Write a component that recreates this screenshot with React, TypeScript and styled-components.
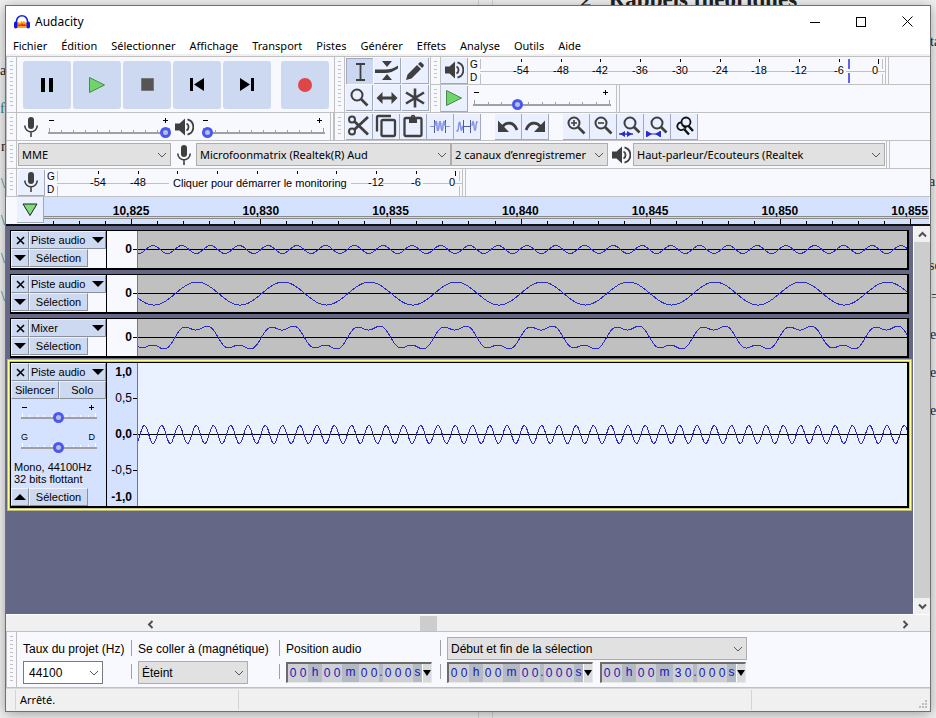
import React from "react";
import styled, { createGlobalStyle } from "styled-components";

const UI = '"Noto Sans", "Open Sans", sans-serif';
const ARIAL = '"Liberation Sans", Arial, sans-serif';
const PANEL = "#f8f9ff";
const LINE = "#c0c0c0";
const BTN = "#cdd9f0";
const WAVE = "#2c2cc4";

const Global = createGlobalStyle`
  *, *::before, *::after { box-sizing: border-box; }
  body { margin: 0; background: #f1f1f1; font-family: ${UI}; font-size: 11px; color: #000; }
  button, input, select { font: inherit; color: inherit; margin: 0; padding: 0; border: 0; border-radius: 0; outline: 0; background: none; }
  svg { display: block; }
`;

/* ---------- desktop behind the window ---------- */

const Desktop = styled.div`
  position: relative;
  display: flex;
  min-height: 100vh;
  padding: 5px 5px 6px;
  overflow: hidden;
`;
const Snippet = styled.span<{ $x?: number; $right?: number; $y: number; $c?: string; $big?: boolean }>`
  position: absolute;
  ${(p) => (p.$right !== undefined ? `left: calc(100% - ${p.$right}px);` : `left: ${p.$x}px;`)}
  top: ${(p) => p.$y}px;
  font: ${(p) => (p.$big ? "bold 23px/24px" : "14px/16px")} "Liberation Serif", serif;
  color: ${(p) => p.$c || "#222"};
  white-space: pre;
`;
const Sheet = styled.div`
  position: absolute;
  inset: 0 auto 0 478px;
  width: 15px;
  border: solid #d4d4d4;
  border-width: 0 1px;
`;
const Window = styled.main`
  position: relative;
  flex: 1;
  min-width: 0;
  display: flex;
  flex-direction: column;
  border: 1px solid #707070;
  background: #fff;
  box-shadow: 0 2px 12px rgba(0, 0, 0, 0.35);
`;

/* ---------- title and menu ---------- */

const TitleBar = styled.header`
  display: flex;
  align-items: center;
  height: 31px;
  padding-left: 8px;
`;
const Title = styled.h1`
  margin: 0 auto 0 5px;
  font-size: 12px;
  font-weight: 400;
`;
const CaptionButton = styled.button`
  width: 46px;
  height: 29px;
  display: grid;
  place-items: center;
`;
const MenuBar = styled.nav`
  display: flex;
  height: 19px;
  border-bottom: 2px solid #f0f0f0;
`;
const MenuItem = styled.button`
  padding: 0 7px;
  font-size: 11px;
  line-height: 17px;
  white-space: nowrap;
`;

/* ---------- toolbars ---------- */

const Dock = styled.section`
  display: flex;
  flex-direction: column;
  background: ${PANEL};
  border-top: 1px solid ${LINE};
`;
const DockRow = styled.div<{ $h?: number }>`
  display: flex;
  min-height: ${(p) => p.$h || 28}px;
  border-bottom: 1px solid ${LINE};
`;
const Stack = styled.div`
  flex: 1;
  display: flex;
  flex-direction: column;
  & > * { flex: 1; min-height: 27px; }
  & > * + * { border-top: 1px solid ${LINE}; }
`;
const Strip = styled.div`
  display: flex;
`;
const Bar = styled.div<{ $w?: number; $end?: boolean }>`
  display: flex;
  align-items: center;
  flex: none;
  ${(p) => (p.$w ? `width: ${p.$w}px;` : "")}
  ${(p) => (p.$end ? `border-right: 4px double ${LINE};` : "")}
`;
const Grip = styled.div`
  align-self: stretch;
  flex: none;
  width: 11px;
  padding: 4px 3px 4px 3px;
  border: solid ${LINE};
  border-width: 0 1px;
  &::before {
    content: "";
    display: block;
    height: 100%;
    background: repeating-linear-gradient(${LINE} 0 1px, transparent 1px 4px);
  }
`;
const Transport = styled.div`
  display: flex;
  gap: 2px;
  padding-left: 6px;
`;
const BigButton = styled.button<{ $apart?: boolean }>`
  width: 48px;
  height: 48px;
  margin-left: ${(p) => (p.$apart ? 8 : 0)}px;
  display: grid;
  place-items: center;
  background: ${BTN};
  border-radius: 3px;
`;
const ToolGrid = styled.div`
  display: grid;
  grid-template-columns: repeat(3, 27px);
  gap: 1px;
  padding: 0 1px;
`;
const ToolButton = styled.button<{ $on?: boolean }>`
  width: 27px;
  height: 26px;
  flex: none;
  display: grid;
  place-items: center;
  background: ${(p) => (p.$on ? "#cbd7f0" : "#eaf0ff")};
  border: solid #a3a9bd;
  border-width: ${(p) => (p.$on ? "1px 0 0 1px" : "0 1px 1px 0")};
`;
const ToolRun = styled.div<{ $gap?: boolean }>`
  display: flex;
  margin-left: ${(p) => (p.$gap ? 14 : 1)}px;
`;
const IconSlot = styled.span<{ $w: number }>`
  flex: none;
  width: ${(p) => p.$w}px;
  display: grid;
  place-items: center;
`;
const Channels = styled.div`
  flex: none;
  display: flex;
  flex-direction: column;
  justify-content: center;
  width: 12px;
  padding-left: 2px;
  font: 10px/13px ${ARIAL};
`;
const ScaleSvg = styled.svg<{ $w: number }>`
  width: ${(p) => p.$w}px;
  height: 26px;
  font: 11px ${ARIAL};
`;

/* ---------- slider ---------- */

const SliderBox = styled.div<{ $w: number; $small?: boolean }>`
  flex: none;
  display: grid;
  grid-template: 100% / 100%;
  width: ${(p) => p.$w}px;
  height: ${(p) => (p.$small ? 20 : 22)}px;
  & > * { grid-area: 1 / 1; }
`;
const SliderArt = styled.svg`
  width: 100%;
  height: 100%;
  overflow: visible;
  font: 10px ${ARIAL};
`;
const Range = styled.input<{ $small?: boolean }>`
  appearance: none;
  align-self: end;
  width: 100%;
  height: 11px;
  min-width: 0;
  &::-webkit-slider-thumb {
    appearance: none;
    width: 11px;
    height: 11px;
    border: 3px solid #4a58ee;
    border-radius: 50%;
    background: #b9bde0;
  }
`;

function Slider(p: { label: string; w: number; value: number; ticks: number; small?: boolean; a?: string; b?: string }) {
  const h = p.small ? 20 : 22;
  const y = h - 6;
  return (
    <SliderBox $w={p.w} $small={p.small}>
      <SliderArt aria-hidden="true" shapeRendering="crispEdges">
        <rect x="0" y={y} width="100%" height="2" fill="#a0a0a0" />
        {Array.from({ length: p.ticks }, (_, i) => {
          const x = 1 + (i * (p.w - 3)) / (p.ticks - 1);
          const tall = i === 0 || i === p.ticks - 1;
          return <rect key={i} x={Math.round(x)} y={y - (tall ? 4 : 2)} width="1" height={tall ? 4 : 2} fill={p.small ? "#fff" : "#a0a0a0"} />;
        })}
        {p.a ? (
          <>
            <text x="0" y="7" fontSize="9">{p.a}</text>
            <text x={p.w - 2} y="7" fontSize="9" textAnchor="end">{p.b}</text>
          </>
        ) : (
          <>
            <path d="M1 4.5h5" stroke="#000" />
            <path d={`M${p.w - 8} 4.5h5M${p.w - 5.5} 2v5`} stroke="#000" />
          </>
        )}
      </SliderArt>
      <Range type="range" aria-label={p.label} min="0" max="100" defaultValue={p.value} />
    </SliderBox>
  );
}

/* ---------- drop-down ---------- */

const SelectBox = styled.span<{ $w: number; $white?: boolean; $arial?: boolean }>`
  flex: none;
  display: grid;
  align-items: center;
  width: ${(p) => p.$w}px;
  height: 23px;
  border: 1px solid ${(p) => (p.$white ? "#7a7a7a" : "#adadad")};
  background: ${(p) => (p.$white ? "#fff" : "#e1e1e1")};
  & > * { grid-area: 1 / 1; }
  & > select {
    appearance: none;
    width: 100%;
    height: 100%;
    min-width: 0;
    padding: 0 17px 0 ${(p) => (p.$white ? 5 : 3)}px;
    font: 12px ${(p) => (p.$arial ? ARIAL : UI)};
    font-size: ${(p) => (p.$arial ? 12 : 11)}px;
  }
  & > svg { justify-self: end; margin-right: 3px; pointer-events: none; }
`;
function Select(p: { label?: string; id?: string; w: number; text: string; white?: boolean; arial?: boolean }) {
  return (
    <SelectBox $w={p.w} $white={p.white} $arial={p.arial}>
      <select id={p.id} aria-label={p.label} defaultValue={p.text}>
        <option>{p.text}</option>
      </select>
      <svg width="10" height="6" viewBox="0 0 10 6" fill="none" stroke="#555">
        <path d="M1 1l4 4 4-4" />
      </svg>
    </SelectBox>
  );
}

/* ---------- icons ---------- */

const INK = "#3f3f3f";
const Mic = () => (
  <svg width="18" height="22" viewBox="0 0 18 22" fill="none" stroke={INK} strokeWidth="1.6">
    <rect x="6" y="1" width="6" height="12" rx="3" fill={INK} stroke="none" />
    <path d="M2.8 9.5a6.2 6.4 0 0 0 12.4 0M9 16v5" />
  </svg>
);
const Speaker = () => (
  <svg width="20" height="20" viewBox="0 0 20 20" fill="none" stroke={INK} strokeWidth="1.8">
    <path d="M1 6.500h4.500L11 1.500v17L5.500 13.500H1z" fill={INK} stroke="none" />
    <path d="M12.500 6.500a4 4 0 0 1 0 7M13.500 2.300a8 8 0 0 1 0 15.400" />
  </svg>
);
const IBeam = () => (
  <svg width="20" height="20" viewBox="0 0 20 20" fill="none" stroke={INK} strokeWidth="1.800">
    <path d="M6 2h9M10.500 2v16M6 18h9" />
  </svg>
);
const Envelope = () => (
  <svg width="26" height="22" viewBox="0 0 26 22" fill={INK}>
    <path d="M8 1h10l-5 6zM8 20h10l-5-6z" />
    <path d="M1 9.500h10c5 0 8-1 13-4v3c-5 3-8 4.500-13 4.500H1z" />
  </svg>
);
const Pencil = () => (
  <svg width="20" height="20" viewBox="0 0 20 20" fill={INK}>
    <path d="M1 19l1.500-5.500L12 4l4 4-9.500 9.500zM13 3l1.500-1.500a1.500 1.500 0 0 1 2 0l2 2a1.500 1.500 0 0 1 0 2L17 7z" />
  </svg>
);
const Lens = ({ mark }: { mark?: string }) => (
  <svg width="22" height="22" viewBox="0 0 22 22" fill="none" stroke={INK}>
    <circle cx="9" cy="8" r="5.500" strokeWidth="2" />
    <path d="M13 12l6.500 6.500" strokeWidth="2.600" />
    {mark === "+" && <path d="M9 5v6M6 8h6" strokeWidth="1.600" />}
    {mark === "-" && <path d="M6 8h6" strokeWidth="1.600" />}
  </svg>
);
const LensFit = ({ project }: { project?: boolean }) => (
  <svg width="24" height="24" viewBox="0 0 24 24" fill="none" stroke={INK}>
    <circle cx="12" cy="9" r="5.500" strokeWidth="2" />
    <path d="M16 13l5.500 5.500" strokeWidth="2.600" />
    {project ? (
      <g fill="#2b2bc8" stroke="#2b2bc8">
        <path d="M1.500 17v6M15.500 17v6M2 20h13" fill="none" />
        <path d="M2 17l5 3-5 3zM15 17l-5 3 5 3z" stroke="none" />
      </g>
    ) : (
      <g fill="#2b2bc8" stroke="#2b2bc8">
        <path d="M1 20h14" fill="none" strokeWidth="1.400" />
        <path d="M7 17l-5 3 5 3zM9 17l5 3-5 3z" stroke="none" />
      </g>
    )}
  </svg>
);
const LensToggle = () => (
  <svg width="22" height="22" viewBox="0 0 22 22" fill="none" stroke="#111" strokeWidth="1.800">
    <circle cx="13" cy="7" r="4.500" />
    <path d="M8 7.500a3.800 3.800 0 1 0 3 6.200" />
    <path d="M11 14l5 5.500M15.500 11l4.500 5" strokeWidth="2.400" />
    <path d="M9 9.500l4 4" />
  </svg>
);
const Arrows = () => (
  <svg width="24" height="20" viewBox="0 0 24 20" fill={INK}>
    <path d="M1.500 10l6-6v4.600h9V4l6 6-6 6v-4.600h-9V16z" />
  </svg>
);
const Star = () => (
  <svg width="22" height="22" viewBox="0 0 22 22" stroke={INK} strokeWidth="2.600">
    <path d="M11 1.500v19M2 5.500l18 11M20 5.500l-18 11" />
  </svg>
);
const Cut = () => (
  <svg width="24" height="24" viewBox="0 0 24 24" fill="none" stroke={INK} strokeWidth="2">
    <circle cx="5" cy="5.500" r="3" />
    <circle cx="5" cy="17.500" r="3" />
    <path d="M7.500 7.500L21 20.500M7.500 15.500L21 3" strokeWidth="2.800" />
  </svg>
);
const Copy = () => (
  <svg width="24" height="24" viewBox="0 0 24 24" fill="none" stroke={INK} strokeWidth="2.300">
    <path d="M3 17.500V3q0-1 1-1h13" />
    <rect x="7.500" y="6" width="13.500" height="16" rx="1.500" />
  </svg>
);
const Paste = () => (
  <svg width="24" height="24" viewBox="0 0 24 24" fill="none" stroke={INK} strokeWidth="2.300">
    <rect x="3.500" y="4" width="17" height="18" rx="1.500" />
    <path d="M8 9V4.500h2a2 2 0 0 1 4 0h2V9z" fill={INK} stroke="none" />
    <circle cx="12" cy="3" r="1.500" strokeWidth="1.500" />
  </svg>
);
const Trim = () => (
  <svg width="24" height="20" viewBox="0 0 24 20" fill="none" stroke="#8796ea" strokeWidth="1.200">
    <path d="M2 10.500h4M18 10.500h4" />
    <path d="M6.500 4v13M17.500 4v13" stroke="#4f5a9c" strokeWidth="1" />
    <path d="M7 10c.5-6 2-6 2 0s1.500 6 2 0 1.500-6 2 0 1.500 6 2 0 1.500-6 2 0" strokeWidth="1.600" />
  </svg>
);
const Silence = () => (
  <svg width="24" height="20" viewBox="0 0 24 20" fill="none" stroke="#8796ea" strokeWidth="1.500">
    <path d="M2 14c0 2 1.200 2 1.500-3s1.500-7 2-1 1.500 6 2 0M17 10c.5-6 1.500-6 2 0s1.500 6 2 0 1-4 1.500-3" />
    <path d="M8.500 4v13M15.500 4v13M9 10.500h6" stroke="#4f5a9c" strokeWidth="1" />
  </svg>
);
const Undo = ({ flip }: { flip?: boolean }) => (
  <svg width="24" height="18" viewBox="0 0 24 18">
    <g transform={flip ? "translate(24 0) scale(-1 1)" : undefined}>
      <path d="M6 10C11 4 18 5 21 13" fill="none" stroke={INK} strokeWidth="2.800" />
      <path d="M2 3.500V15h11z" fill={INK} />
    </g>
  </svg>
);
const Tri = ({ dir, w = 12 }: { dir: "up" | "down"; w?: number }) => (
  <svg width={w} height="6" viewBox="0 0 12 6" preserveAspectRatio="none">
    <path d={dir === "down" ? "M0 0h12l-6 6z" : "M0 6h12l-6-6z"} />
  </svg>
);
const GreenPlay = () => (
  <svg width="18" height="18" viewBox="0 0 18 18">
    <path d="M1.500 1.500L16.500 9l-15 7.500z" fill="#6fd56b" stroke="#4c8a4a" />
  </svg>
);
const Logo = () => (
  <svg width="16" height="16" viewBox="0 0 16 16">
    <path d="M3 14V9l1.500-1L6 9l1-2 1.500 1L10 7l1.500 1.500L13 9v5z" fill="#ffa31c" />
    <path d="M3.500 12l1.500-2 1.500 1L8 9l1.500 1.500L11 10l1.500 2z" fill="#e83010" />
    <path d="M2.500 9V7.500a5.500 5.800 0 0 1 11 0V9" fill="none" stroke="#1c28d8" strokeWidth="1.600" />
    <rect x="0" y="7.500" width="3.500" height="7" rx="1.700" fill="#1414e6" />
    <rect x="12.500" y="7.500" width="3.500" height="7" rx="1.700" fill="#1414e6" />
  </svg>
);

/* ---------- level meter ---------- */

const DB = ["-54", "-48", "-42", "-36", "-30", "-24", "-18", "-12", "-6", "0"];
function Meter({ w, first, step, labels, peak }: { w: number; first: number; step: number; labels: string[]; peak?: number }) {
  return (
    <ScaleSvg $w={w} aria-label="Niveau en dB">
      <g shapeRendering="crispEdges" fill={LINE}>
        <rect x="0" y="1" width="1" height="10" />
        <rect x="0" y="16" width="1" height="10" />
        <rect x="0" y="13" width={w} height="1" />
        <rect x={w - 3} y="1" width="1" height="10" />
        <rect x={w - 3} y="16" width="1" height="10" />
      </g>
      {DB.map((d, i) => {
        const x = Math.round(first + i * step);
        const last = d === "0";
        return (
          <g key={d}>
            <rect x={x} y="1" width="1" height={last ? 5 : 3} shapeRendering="crispEdges" />
            {labels.includes(d) && (
              <>
                <rect x={last ? x - 6 : x - (d === "-6" ? 0 : 3)} y="9" width={last ? 6 : 7} height="8" fill={PANEL} />
                <text x={last ? x - 3 : x} y="16" textAnchor="middle">{d}</text>
              </>
            )}
          </g>
        );
      })}
      {peak && (
        <g fill="#5f63ee" shapeRendering="crispEdges">
          <rect x={peak} y="1" width="2" height="10" />
          <rect x={peak} y="15" width="2" height="10" />
        </g>
      )}
    </ScaleSvg>
  );
}
const MeterArea = styled.div`
  display: grid;
  align-items: center;
  & > * { grid-area: 1 / 1; }
`;
const MeterHint = styled.button`
  justify-self: start;
  margin-left: 112px;
  padding: 0 4px;
  background: ${PANEL};
  font: 11px/16px ${ARIAL};
`;

/* ---------- timeline ---------- */

const Timeline = styled.div`
  display: flex;
  height: 29px;
  padding: 0 1px 0 11px;
  background: ${PANEL};
  border-bottom: 2px solid #111;
`;
const TimelineSvg = styled.svg`
  flex: 1;
  min-width: 0;
  height: 27px;
  background: #d5e2ff;
  font: bold 12px ${ARIAL};
`;
const TIMES = ["10,825", "10,830", "10,835", "10,840", "10,845", "10,850", "10,855"];
const RULER_SPAN = 884;

/* ---------- tracks ---------- */

const Workspace = styled.section`
  flex: 1;
  display: flex;
  min-height: 0;
`;
const TrackList = styled.div`
  flex: 1;
  min-width: 0;
  padding: 0 1px;
  background: #646786;
`;
const TrackFrame = styled.div<{ $focus?: boolean }>`
  padding: ${(p) => (p.$focus ? "2px" : "4px 3px 0")};
  ${(p) =>
    p.$focus
      ? "margin-top: 1px; border: 1px solid #b9b97c; background: #ffff8a;"
      : ""}
`;
const TrackBody = styled.article<{ $h: number; $focus?: boolean }>`
  display: flex;
  height: ${(p) => p.$h}px;
  border: 1px solid #000;
  border-right-width: 2px;
  border-bottom-width: 2px;
  box-shadow: ${(p) => (p.$focus ? "0 0 0 1px #c9c983" : "none")};
`;
const Head = styled.div<{ $focus?: boolean }>`
  flex: none;
  display: flex;
  flex-direction: column;
  width: 96px;
  border-right: 1px solid #000;
  background: ${(p) => (p.$focus ? "#d5e2ff" : PANEL)};
  font: 12px ${ARIAL};
`;
const HeadRow = styled.div`
  display: flex;
  flex: none;
`;
const HeadButton = styled.button<{ $w?: number; $menu?: boolean }>`
  height: 18px;
  ${(p) => (p.$w ? `width: ${p.$w}px;` : "flex: 1;")}
  display: flex;
  align-items: center;
  justify-content: ${(p) => (p.$menu ? "space-between" : "center")};
  padding: 0 ${(p) => (p.$menu ? 1 : 0)}px;
  background: ${BTN};
  border: solid;
  border-width: 1px;
  border-color: #eef2fd #8a8f9c #8a8f9c #eef2fd;
  font-size: 11px;
  white-space: nowrap;
`;
const HeadSliders = styled.div`
  flex: 1;
  display: flex;
  flex-direction: column;
  align-items: center;
  gap: 10px;
  padding-top: 4px;
`;
const HeadInfo = styled.p`
  margin: 0;
  padding: 0 3px 3px;
  font: 11px/12px ${ARIAL};
`;
const Scale = styled.div<{ $focus?: boolean }>`
  flex: none;
  width: 31px;
  display: grid;
  align-items: center;
  grid-template-rows: ${(p) => (p.$focus ? "18px 1fr 1fr 1fr 18px" : "1fr")};
  border-right: 1px solid #777;
  background: ${(p) => (p.$focus ? "#d5e2ff" : PANEL)};
`;
const Mark = styled.span<{ $bold?: boolean; $tick?: boolean }>`
  display: flex;
  align-items: center;
  justify-content: flex-end;
  gap: 1px;
  padding-right: ${(p) => (p.$tick ? 0 : 5)}px;
  font: ${(p) => (p.$bold ? "bold" : "normal")} 12px/15px ${ARIAL};
  &::after {
    content: "";
    display: ${(p) => (p.$tick ? "block" : "none")};
    width: 4px;
    height: 1px;
    background: #000;
  }
`;
const WaveSvg = styled.svg<{ $focus?: boolean }>`
  flex: 1;
  min-width: 0;
  height: 100%;
  background: ${(p) => (p.$focus ? "#eaf1ff" : "#c0c0c0")};
`;

type Harmonic = { amp: number; period: number; peak: number };
function Wave({ parts, h, focus }: { parts: Harmonic[]; h: number; focus?: boolean }) {
  const mid = h / 2;
  const pts: string[] = [];
  for (let x = 0; x <= 769; x++) {
    const v = parts.reduce((s, q) => s + q.amp * Math.cos((2 * Math.PI * (x - q.peak)) / q.period), 0);
    pts.push(`${x} ${(mid - v).toFixed(1)}`);
  }
  return (
    <WaveSvg $focus={focus} viewBox={`0 0 769 ${h}`} preserveAspectRatio="none" shapeRendering="crispEdges">
      <path d={`M0 ${mid}H769`} stroke="#000" vectorEffect="non-scaling-stroke" />
      <path d={`M${pts.join("L")}`} fill="none" stroke={WAVE} vectorEffect="non-scaling-stroke" />
    </WaveSvg>
  );
}

const LOW = { amp: 11.5, period: 86.3, peak: 59 };
const THIRD = { amp: 4, period: 28.77, peak: 15 };
const FIFTH = { amp: 9, period: 17.27, peak: 6.4 };

const CloseGlyph = () => (
  <svg width="9" height="9" viewBox="0 0 9 9" stroke="#000" strokeWidth="1.600">
    <path d="M1 1l7 7M8 1L1 8" />
  </svg>
);
function SmallTrack({ name, parts }: { name: string; parts: Harmonic[] }) {
  return (
    <TrackFrame>
      <TrackBody $h={40}>
        <Head>
          <HeadRow>
            <HeadButton $w={18} aria-label="Fermer la piste"><CloseGlyph /></HeadButton>
            <HeadButton $menu>{name}<Tri dir="down" /></HeadButton>
          </HeadRow>
          <HeadRow>
            <HeadButton $w={18} aria-label="Déplier"><Tri dir="down" /></HeadButton>
            <HeadButton $w={59}>Sélection</HeadButton>
          </HeadRow>
        </Head>
        <Scale><Mark $bold $tick>0</Mark></Scale>
        <Wave parts={parts} h={37} />
      </TrackBody>
    </TrackFrame>
  );
}

/* ---------- scroll bars ---------- */

const VScroll = styled.div`
  flex: none;
  width: 17px;
  display: flex;
  flex-direction: column;
  border-left: 1px solid #fff;
  background: #f0f0f0;
`;
const HScroll = styled.div`
  display: flex;
  height: 18px;
  padding: 1px 17px 1px 136px;
  border-top: 1px solid #fff;
  border-bottom: 1px solid ${LINE};
  background: #f0f0f0;
`;
const ScrollButton = styled.button`
  flex: none;
  width: 16px;
  height: 16px;
  display: grid;
  place-items: center;
`;
const VThumb = styled.div`
  flex: 1;
  background: #cdcdcd;
`;
const HTrack = styled.div`
  flex: 1;
  padding-left: 34%;
`;
const HThumb = styled.div`
  width: 17px;
  height: 15px;
  background: #cdcdcd;
`;
const Chevron = ({ turn }: { turn: number }) => (
  <svg width="9" height="9" viewBox="0 0 9 9" fill="none" stroke="#505050" strokeWidth="2">
    <path d="M1 6.500L4.500 3 8 6.500" transform={`rotate(${turn} 4.500 4.500)`} />
  </svg>
);

/* ---------- selection bar ---------- */

const SelectionBar = styled.section`
  display: flex;
  height: 56px;
  background: ${PANEL};
  border-bottom: 1px solid ${LINE};
`;
const Field = styled.div<{ $w: number }>`
  flex: none;
  width: ${(p) => p.$w}px;
  display: grid;
  grid-template-rows: 24px 24px;
  align-items: center;
  align-content: center;
  padding: 2px 0 0 6px;
  font: 12px ${ARIAL};
  white-space: nowrap;
`;
const Divider = styled.div`
  flex: none;
  width: 1px;
  margin: 8px 0;
  background: linear-gradient(#a0a0a0 0 16px, transparent 16px 24px, #a0a0a0 24px);
`;
const TimePair = styled.div`
  display: flex;
  gap: 7px;
`;
const TimeBox = styled.div`
  display: flex;
  width: 146px;
  height: 21px;
  border: 1px solid;
  border-color: #6b6b6b #e8e8e8 #e8e8e8 #6b6b6b;
  border-top-width: 2px;
  border-left-width: 2px;
  background: #b4b9c6;
  color: #1616b8;
  font: 12px/17px ${ARIAL};
`;
const Digit = styled.input`
  width: 10px;
  min-width: 0;
  background: #cfd0d2;
  text-align: center;
`;
const Unit = styled.span<{ $w: number }>`
  width: ${(p) => p.$w}px;
  text-align: center;
`;
const TimeMenu = styled.button`
  flex: 1;
  display: grid;
  place-items: center;
  border-left: 1px solid #fff;
  background: #d8dade;
`;
function Time({ label, secs }: { label: string; secs: string }) {
  const d = (v: string, n: string) =>
    v.split("").map((c, i) => <Digit key={n + i} aria-label={`${label} ${n} ${i + 1}`} maxLength={1} defaultValue={c} />);
  return (
    <TimeBox role="group" aria-label={label}>
      {d("00", "heures")}
      <Unit $w={14}>h</Unit>
      {d("00", "minutes")}
      <Unit $w={17}>m</Unit>
      {d(secs, "secondes")}
      <Unit $w={4}>.</Unit>
      {d("000", "millièmes")}
      <Unit $w={9}>s</Unit>
      <TimeMenu aria-label={`Format ${label}`}><Tri dir="down" w={8} /></TimeMenu>
    </TimeBox>
  );
}

/* ---------- status bar ---------- */

const StatusBar = styled.footer`
  display: flex;
  align-items: stretch;
  height: 23px;
  padding: 1px 2px 1px 9px;
  border-top: 1px solid #d8d8d8;
  background: #f0f0f0;
  line-height: 20px;
`;
const StatusCell = styled.span<{ $w?: number }>`
  ${(p) => (p.$w ? `width: ${p.$w}px;` : "flex: 1;")}
  padding-left: 4px;
  border-left: 1px solid #d4d4d4;
`;
const ResizeMark = () => (
  <svg width="10" height="20" viewBox="0 0 10 20" fill="#bdbdbd">
    <path d="M7 10h2v2H7zM7 13h2v2H7zM7 16h2v2H7zM4 13h2v2H4zM4 16h2v2H4zM1 16h2v2H1z" />
  </svg>
);

const MENUS = ["Fichier", "Édition", "Sélectionner", "Affichage", "Transport", "Pistes", "Générer", "Effets", "Analyse", "Outils", "Aide"];

export default function App() {
  return (
    <>
      <Global />
      <Desktop>
        <Sheet />
        <Snippet $x={580} $y={-12} $big>{"2   Rappels théoriques"}</Snippet>
        <Snippet $x={0} $y={63}>a</Snippet>
        <Snippet $x={0} $y={101} $c="#2f7f8c">f</Snippet>
        <Snippet $x={1} $y={139}>r</Snippet>
        <Snippet $x={1} $y={176} $c="#2f7f8c">\</Snippet>
        <Snippet $x={1} $y={213} $c="#2f7f8c">\</Snippet>
        <Snippet $x={1} $y={251} $c="#2f7f8c">\</Snippet>
        <Snippet $x={1} $y={289} $c="#2f7f8c">\</Snippet>
        <Snippet $right={6} $y={34}>ta</Snippet>
        <Snippet $right={7} $y={174}>a</Snippet>
        <Snippet $right={7} $y={258}>se</Snippet>
        <Snippet $right={5} $y={289}>=</Snippet>
        <Snippet $right={6} $y={327}>e</Snippet>
        <Snippet $right={6} $y={365}>e</Snippet>
        <Snippet $right={6} $y={403}>e</Snippet>
        <Window>
          <TitleBar>
            <Logo />
            <Title>Audacity</Title>
            <CaptionButton aria-label="Réduire">
              <svg width="10" height="10" shapeRendering="crispEdges"><path d="M0 5.500h10" stroke="#000" /></svg>
            </CaptionButton>
            <CaptionButton aria-label="Agrandir">
              <svg width="10" height="10" shapeRendering="crispEdges"><path d="M.5.5h9v9h-9z" fill="none" stroke="#000" /></svg>
            </CaptionButton>
            <CaptionButton aria-label="Fermer">
              <svg width="11" height="11"><path d="M.5.5l10 10M10.500.5l-10 10" stroke="#000" /></svg>
            </CaptionButton>
          </TitleBar>
          <MenuBar>
            {MENUS.map((m) => <MenuItem key={m}>{m}</MenuItem>)}
          </MenuBar>

          <Dock>
            <DockRow $h={56}>
              <Bar $w={328}>
                <Grip />
                <Transport>
                  <BigButton aria-label="Pause">
                    <svg width="12" height="14"><path d="M0 0h4v14H0zM8 0h4v14H8z" /></svg>
                  </BigButton>
                  <BigButton aria-label="Lecture"><GreenPlay /></BigButton>
                  <BigButton aria-label="Arrêt">
                    <svg width="13" height="13"><path d="M.5.5h12v12H.5z" fill="#555" stroke="#777" /></svg>
                  </BigButton>
                  <BigButton aria-label="Début">
                    <svg width="14" height="13"><path d="M0 0h3v13H0zM14 0v13L4 6.500z" /></svg>
                  </BigButton>
                  <BigButton aria-label="Fin">
                    <svg width="14" height="13"><path d="M11 0h3v13h-3zM0 0v13l10-6.500z" /></svg>
                  </BigButton>
                  <BigButton $apart aria-label="Enregistrer">
                    <svg width="14" height="14"><circle cx="7" cy="7" r="7" fill="#e04646" /></svg>
                  </BigButton>
                </Transport>
              </Bar>
              <Bar>
                <Grip />
                <ToolGrid>
                  <ToolButton $on aria-label="Sélection"><IBeam /></ToolButton>
                  <ToolButton aria-label="Enveloppe"><Envelope /></ToolButton>
                  <ToolButton aria-label="Dessin"><Pencil /></ToolButton>
                  <ToolButton aria-label="Zoom"><Lens /></ToolButton>
                  <ToolButton aria-label="Glissement"><Arrows /></ToolButton>
                  <ToolButton aria-label="Multi-outils"><Star /></ToolButton>
                </ToolGrid>
              </Bar>
              <Stack>
                <Strip>
                  <Bar $end>
                    <Grip />
                    <ToolButton aria-label="Niveau de lecture"><Speaker /></ToolButton>
                    <Channels><span>G</span><span>D</span></Channels>
                    <Meter w={405} first={41} step={39.7} labels={DB} peak={368} />
                  </Bar>
                </Strip>
                <Strip>
                  <Bar $end $w={190}>
                    <Grip />
                    <ToolButton aria-label="Lecture à vitesse"><GreenPlay /></ToolButton>
                    <IconSlot $w={5} />
                    <Slider label="Vitesse de lecture" w={138} value={31} ticks={11} />
                  </Bar>
                </Strip>
              </Stack>
            </DockRow>
            <DockRow>
              <Bar $end $w={328}>
                <Grip />
                <IconSlot $w={28}><Mic /></IconSlot>
                <IconSlot $w={3} />
                <Slider label="Volume d'enregistrement" w={123} value={100} ticks={11} />
                <IconSlot $w={26}><Speaker /></IconSlot>
                <IconSlot $w={5} />
                <Slider label="Volume de lecture" w={123} value={0} ticks={11} />
              </Bar>
              <Bar>
                <Grip />
                <ToolRun>
                  <ToolButton aria-label="Couper"><Cut /></ToolButton>
                  <ToolButton aria-label="Copier"><Copy /></ToolButton>
                  <ToolButton aria-label="Coller"><Paste /></ToolButton>
                  <ToolButton aria-label="Rogner"><Trim /></ToolButton>
                  <ToolButton aria-label="Silence"><Silence /></ToolButton>
                </ToolRun>
                <ToolRun $gap>
                  <ToolButton aria-label="Annuler"><Undo /></ToolButton>
                  <ToolButton aria-label="Refaire"><Undo flip /></ToolButton>
                </ToolRun>
                <ToolRun $gap>
                  <ToolButton aria-label="Zoom avant"><Lens mark="+" /></ToolButton>
                  <ToolButton aria-label="Zoom arrière"><Lens mark="-" /></ToolButton>
                  <ToolButton aria-label="Ajuster la sélection"><LensFit /></ToolButton>
                  <ToolButton aria-label="Ajuster le projet"><LensFit project /></ToolButton>
                  <ToolButton aria-label="Bascule zoom"><LensToggle /></ToolButton>
                </ToolRun>
              </Bar>
            </DockRow>
            <DockRow>
              <Bar $end>
                <Grip />
                <IconSlot $w={1} />
                <Select label="Hôte audio" w={153} text="MME" />
                <IconSlot $w={25}><Mic /></IconSlot>
                <Select label="Périphérique d'enregistrement" w={255} text="Microfoonmatrix (Realtek(R) Aud" />
                <Select label="Canaux d'enregistrement" w={157} text="2 canaux d’enregistremer" />
                <IconSlot $w={25}><Speaker /></IconSlot>
                <Select label="Périphérique de lecture" w={252} text="Haut-parleur/Ecouteurs (Realtek" />
                <IconSlot $w={1} />
              </Bar>
            </DockRow>
            <DockRow>
              <Bar $end>
                <Grip />
                <IconSlot $w={1} />
                <ToolButton aria-label="Niveau d'enregistrement"><Mic /></ToolButton>
                <Channels><span>G</span><span>D</span></Channels>
                <MeterArea>
                  <Meter w={405} first={41} step={39.7} labels={["-54", "-48", "-12", "-6", "0"]} />
                  <MeterHint>Cliquer pour démarrer le monitoring</MeterHint>
                </MeterArea>
              </Bar>
            </DockRow>
          </Dock>

          <Timeline>
            <ToolButton aria-label="Options de la règle">
              <svg width="16" height="14"><path d="M1 1h14l-7 11.500z" fill="#7fdc78" stroke="#222" /></svg>
            </ToolButton>
            <TimelineSvg aria-label="Règle temporelle">
              <g shapeRendering="crispEdges">
                <rect y="19" width="100%" height="1" fill="#8a8a8a" />
                <rect y="20" width="100%" height="1" fill="#d8d8d8" />
                <rect y="21" width="100%" height="1" fill="#8a8a8a" />
                {Array.from({ length: 34 }, (_, i) => {
                  const major = (i + 1) % 5 === 4;
                  const x = 9 + 26 * i - Math.round(i / 14);
                  return <rect key={i} x={`${(x / RULER_SPAN) * 100}%`} y={major ? 22 : 24} width="1" height={major ? 5 : 3} />;
                })}
              </g>
              {TIMES.map((t, i) => (
                <text key={t} x={`${((87 + i * 129.6) / RULER_SPAN) * 100}%`} y="18" textAnchor="middle">{t}</text>
              ))}
            </TimelineSvg>
          </Timeline>

          <Workspace>
            <TrackList>
              <SmallTrack name="Piste audio" parts={[THIRD]} />
              <SmallTrack name="Piste audio" parts={[LOW]} />
              <SmallTrack name="Mixer" parts={[LOW, THIRD]} />
              <TrackFrame $focus>
                <TrackBody $h={146} $focus>
                  <Head $focus>
                    <HeadRow>
                      <HeadButton $w={18} aria-label="Fermer la piste"><CloseGlyph /></HeadButton>
                      <HeadButton $menu>Piste audio<Tri dir="down" /></HeadButton>
                    </HeadRow>
                    <HeadRow>
                      <HeadButton>Silencer</HeadButton>
                      <HeadButton>Solo</HeadButton>
                    </HeadRow>
                    <HeadSliders>
                      <Slider label="Gain" w={76} value={50} ticks={11} small />
                      <Slider label="Panoramique" w={76} value={50} ticks={11} small a="G" b="D" />
                    </HeadSliders>
                    <HeadInfo>Mono, 44100Hz<br />32 bits flottant</HeadInfo>
                    <HeadRow>
                      <HeadButton $w={18} aria-label="Replier"><Tri dir="up" /></HeadButton>
                      <HeadButton $w={59}>Sélection</HeadButton>
                    </HeadRow>
                  </Head>
                  <Scale $focus>
                    <Mark $bold>1,0</Mark>
                    <Mark $tick>0,5</Mark>
                    <Mark $bold $tick>0,0</Mark>
                    <Mark $tick>-0,5</Mark>
                    <Mark $bold>-1,0</Mark>
                  </Scale>
                  <Wave parts={[FIFTH]} h={143} focus />
                </TrackBody>
              </TrackFrame>
            </TrackList>
            <VScroll>
              <ScrollButton aria-label="Monter"><Chevron turn={0} /></ScrollButton>
              <VThumb />
              <ScrollButton aria-label="Descendre"><Chevron turn={180} /></ScrollButton>
            </VScroll>
          </Workspace>
          <HScroll>
            <ScrollButton aria-label="Gauche"><Chevron turn={-90} /></ScrollButton>
            <HTrack><HThumb /></HTrack>
            <ScrollButton aria-label="Droite"><Chevron turn={90} /></ScrollButton>
          </HScroll>

          <SelectionBar>
            <Grip />
            <Field $w={114}>
              <label htmlFor="rate">Taux du projet (Hz)</label>
              <Select id="rate" w={80} text="44100" white arial />
            </Field>
            <Divider />
            <Field $w={147}>
              <label htmlFor="snap">Se coller à (magnétique)</label>
              <Select id="snap" w={110} text="Éteint" arial />
            </Field>
            <Divider />
            <Field $w={160}>
              <span>Position audio</span>
              <Time label="Position audio" secs="00" />
            </Field>
            <Divider />
            <Field $w={306}>
              <Select label="Mode de sélection" w={300} text="Début et fin de la sélection" arial />
              <TimePair>
                <Time label="Début" secs="00" />
                <Time label="Fin" secs="30" />
              </TimePair>
            </Field>
          </SelectionBar>
          <StatusBar>
            <StatusCell $w={223}>Arrêté.</StatusCell>
            <StatusCell $w={513} />
            <StatusCell />
            <ResizeMark />
          </StatusBar>
        </Window>
      </Desktop>
    </>
  );
}
